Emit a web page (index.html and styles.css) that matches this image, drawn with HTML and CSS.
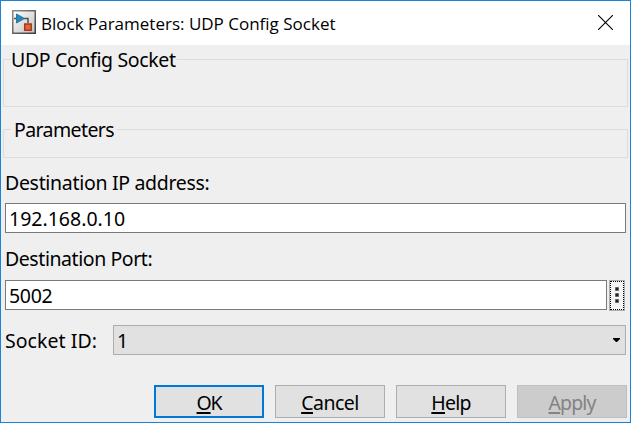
FILE: index.html
```html
<!DOCTYPE html>
<html lang="en">
<head>
<meta charset="utf-8">
<title>Block Parameters: UDP Config Socket</title>
<link rel="stylesheet" href="styles.css">
</head>
<body>
<div class="dialog">
  <header class="titlebar">
    <svg class="app-icon" viewBox="0 0 24 24">
      <defs>
        <linearGradient id="face" x1="0" y1="0" x2="1" y2="1"><stop offset="0" stop-color="#fff"/><stop offset="1" stop-color="#c2c2c2"/></linearGradient>
        <linearGradient id="frame" x1="0" y1="0" x2="1" y2="1"><stop offset="0" stop-color="#8c8c8c"/><stop offset="1" stop-color="#3c3c3c"/></linearGradient>
      </defs>
      <rect x=".75" y=".75" width="22.500" height="22.500" fill="url(#face)" stroke="url(#frame)" stroke-width="1.500"/>
      <path d="M2 8.500H5M12 8.500H16V13" fill="none" stroke="#4d5257" stroke-width="1.500"/>
      <path d="M4.500 4L12.500 8.500L4.500 13Z" fill="#2489bd" stroke="#2b789f" stroke-width="1"/>
      <rect x="12.700" y="14" width="6.500" height="6.300" fill="#e0663c" stroke="#a83a18" stroke-width="1.500"/>
    </svg>
    <h1 class="title">Block Parameters: UDP Config Socket</h1>
    <svg class="close" viewBox="0 0 15 15"><path d="M0 0L15 15M15 0L0 15"/></svg>
  </header>
  <main class="content">
    <fieldset class="group group-about"><legend>UDP Config Socket</legend></fieldset>
    <fieldset class="group group-params"><legend>Parameters</legend></fieldset>
    <div class="form">
      <div class="label label-ip">Destination IP address:</div>
      <div class="field field-ip">192.168.0.10</div>
      <div class="label label-port">Destination Port:</div>
      <div class="row">
        <div class="field field-port">5002</div>
        <div class="more"><svg viewBox="0 0 14 29"><g fill="#a5a5a5"><rect x="5" y="6" width="4" height="4"/><rect x="5" y="12" width="4" height="4"/><rect x="5" y="18" width="4" height="4"/></g><g fill="#222"><rect x="5.500" y="6.500" width="3" height="3"/><rect x="5.500" y="12.500" width="3" height="3"/><rect x="5.500" y="18.500" width="3" height="3"/></g></svg></div>
      </div>
      <div class="row row-socket">
        <div class="label label-socket">Socket ID:</div>
        <div class="select"><span>1</span><svg class="arrow" viewBox="0 0 7 4"><path d="M0 0H7V1L4 4H3L0 1Z"/></svg></div>
      </div>
    </div>
    <footer class="buttons">
      <div class="button primary"><span><u>O</u>K</span></div>
      <div class="button cancel"><span><u>C</u>ancel</span></div>
      <div class="button help"><span><u>H</u>elp</span></div>
      <div class="button disabled"><span><u>A</u>pply</span></div>
    </footer>
  </main>
</div>
</body>
</html>
```
FILE: styles.css
```css
* { box-sizing: border-box; }
body { margin: 0; }
.dialog {
  width: 631px;
  height: 423px;
  border: 1px solid #1883d7;
  background: #efefef;
  color: #000;
  font: 19.5px/24px "Noto Sans", sans-serif;
  overflow: hidden;
}
.titlebar {
  display: flex;
  align-items: center;
  height: 44px;
  padding: 0 17px 0 11px;
  background: #fff;
}
.app-icon { width: 24px; height: 24px; margin-top: -2px; }
.title {
  flex: 1;
  margin: 2px 0 0 5px;
  font: 400 17px/24px "Open Sans", sans-serif;
}
.close { width: 15px; height: 15px; margin-top: -1px; }
.close path { stroke: #000; stroke-width: 1.1; }
.content { padding-top: 2px; }
.group {
  margin: 0 2px;
  padding: 0;
  border: 1px solid #dcdcdc;
}
.group legend { height: 24px; margin-left: 7px; padding: 0; line-height: 26px; }
.group-about { height: 60px; letter-spacing: -0.35px; }
.group-params { height: 41px; margin-top: 10px; letter-spacing: -0.6px; }
.group-params legend { padding: 0 3px; }
.form { padding: 13px 4px 0; }
.label-ip { letter-spacing: -0.31px; }
.label-port { margin-top: 14px; letter-spacing: -0.43px; }
.field {
  height: 30px;
  padding: 3px;
  border: 1px solid #7a7a7a;
  background: #fff;
}
.field-ip { margin-top: 8px; letter-spacing: 0; }
.field-port { flex: 1; letter-spacing: -0.3px; }
.row { display: flex; margin-top: 9px; }
.more {
  width: 16px;
  height: 31px;
  margin: 0 1px 0 2px;
  border: 1px solid #adadad;
  background: #f4f4f4;
}
.more svg { display: block; width: 14px; height: 29px; outline: 1px dotted #000; outline-offset: -1px; }
.row-socket { align-items: center; margin-top: 14px; }
.label-socket { width: 108px; padding-top: 2px; letter-spacing: 0.05px; }
.select {
  display: flex;
  flex: 1;
  align-items: center;
  justify-content: space-between;
  height: 30px;
  padding: 0 5px 0 3px;
  border: 1px solid #adadad;
  background: #e1e1e1;
}
.select span { padding-top: 2px; }
.arrow { width: 7px; height: 4px; }
.buttons {
  display: flex;
  justify-content: flex-end;
  gap: 11px;
  margin-top: 30px;
  padding-right: 3px;
}
.button {
  width: 110px;
  height: 33px;
  padding-top: 5px;
  border: 1px solid #adadad;
  background: #e1e1e1;
  line-height: 24px;
  text-align: center;
}
.button u {
  text-decoration-thickness: 2px;
  text-underline-offset: 2px;
  text-decoration-skip-ink: none;
}
.primary { padding-top: 4px; border: 2px solid #0078d7; letter-spacing: -1.2px; }
.cancel { letter-spacing: -0.5px; }
.help { letter-spacing: -0.8px; }
.disabled { border-color: #bfbfbf; background: #ccc; color: #838383; letter-spacing: -0.9px; }
```
